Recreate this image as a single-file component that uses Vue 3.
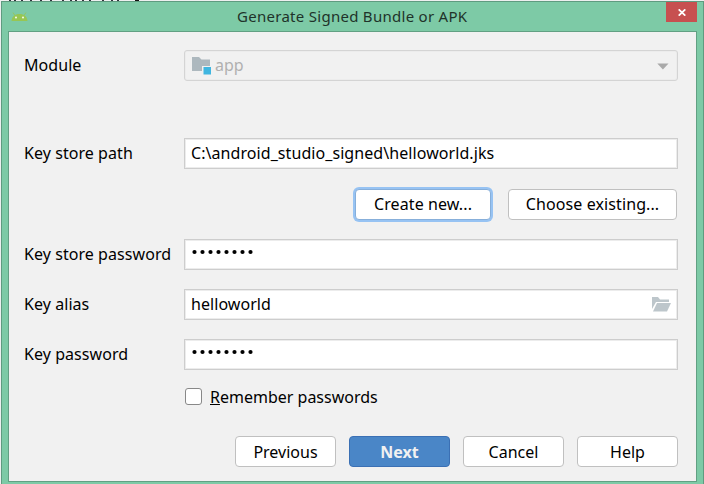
<script setup>
const title = 'Generate Signed Bundle or APK'
const dots = Array.from({ length: 8 }, (_, i) => 3.5 + i * 8)
const marks = [9, 14, 21, 30, 40, 50, 62, 70, 75, 82, 89, 102, 111, 117]
</script>

<template>
  <div class="screen">
    <svg class="behind" width="150" height="1">
      <rect v-for="x in marks" :key="x" :x="x" width="2" height="1" fill="#30343c" />
      <rect x="135" width="4" height="1" fill="#111" />
    </svg>
    <section class="window">
      <header class="titlebar">
        <svg class="droid" width="17" height="10" viewBox="0 0 17 10">
          <path d="M3.8 3.2 2 .6M13.2 3.2 15 .6" fill="none" stroke="#97c653" stroke-width=".9" />
          <path d="M.5 9C.8 4.6 4 2 8.5 2S16.2 4.6 16.5 9z" fill="#97c653" />
          <circle cx="5" cy="5.5" r=".9" fill="#fff" /><circle cx="12" cy="5.5" r=".9" fill="#fff" />
        </svg>
        <h1><span class="t-title">{{ title }}</span></h1>
        <button class="close" aria-label="Close">
          <svg width="8" height="7" viewBox="0 0 8 7"><path d="M.7.3 7.3 6.7M7.3.3.7 6.7" stroke="#fff" stroke-width="1.7" /></svg>
        </button>
      </header>
      <main class="content">
        <div class="row module">
          <label><span class="t-module">Module</span></label>
          <div class="field combo">
            <svg class="folder" width="20" height="19" viewBox="0 0 20 19">
              <path d="M0 1h7l2.5 2.5H18V10h-8v5H0z" fill="#adb8be" />
              <rect x="11.5" y="11" width="7.5" height="7.5" fill="#40b6e0" />
            </svg>
            <span class="t-app">app</span>
            <svg class="arrow" width="12" height="7" viewBox="0 0 12 7"><path d="M.3.5h11.2L5.9 6.5z" fill="#a9a9a9" /></svg>
          </div>
        </div>
        <div class="row path">
          <label><span class="t-path">Key store path</span></label>
          <div class="field"><span class="t-file">C:\android_studio_signed\helloworld.jks</span></div>
        </div>
        <div class="store-actions">
          <button class="btn focus"><span class="t-create">Create new...</span></button>
          <button class="btn choose"><span class="t-choose">Choose existing...</span></button>
        </div>
        <div class="row">
          <label><span class="t-storepw">Key store password</span></label>
          <div class="field"><svg class="dots" width="64" height="6"><circle v-for="x in dots" :key="x" :cx="x" cy="3" r="2.1" /></svg></div>
        </div>
        <div class="row">
          <label><span class="t-alias">Key alias</span></label>
          <div class="field">
            <span class="t-hello">helloworld</span>
            <svg class="open" width="20" height="15" viewBox="0 0 20 15">
              <path d="M0 0h6l2 2.5h9V5H4L0 12z" fill="#adb8be" opacity=".8" />
              <path d="M5 6h14l-4 8.5H1z" fill="#adb8be" opacity=".8" />
            </svg>
          </div>
        </div>
        <div class="row last">
          <label><span class="t-keypw">Key password</span></label>
          <div class="field"><svg class="dots" width="64" height="6"><circle v-for="x in dots" :key="x" :cx="x" cy="3" r="2.1" /></svg></div>
        </div>
        <div class="remember">
          <i class="check"></i>
          <span class="t-remember"><u>R</u>emember passwords</span>
        </div>
        <footer class="actions">
          <button class="btn"><span class="t-prev">Previous</span></button>
          <button class="btn primary"><span class="t-next">Next</span></button>
          <button class="btn"><span class="t-cancel">Cancel</span></button>
          <button class="btn"><span class="t-help">Help</span></button>
        </footer>
      </main>
    </section>
  </div>
</template>

<style>
body { overflow: hidden; background: #eef0f0; }
</style>

<style scoped>
* { box-sizing: border-box; }
.screen { width: 704px; height: 484px; overflow: hidden; font: 16px/22px "Noto Sans", "Open Sans", sans-serif; color: #000; }
.screen span { white-space: nowrap; }
.behind { display: block; }
.window { margin-left: 1px; width: 703px; height: 490px; background: #7dcaa6; border: 1px solid #5f9b80; display: flex; flex-direction: column; }
.titlebar { height: 29px; display: flex; align-items: flex-start; }
.droid { margin: 10px 0 0 9px; flex: none; }
h1 { margin: 3px 0 0 209px; font-weight: 400; font-size: 15px; line-height: 22px; width: 429px; color: #1f332a; }
.t-title { letter-spacing: .28px; }
button { font: inherit; padding: 0; margin: 0; color: inherit; }
.close { width: 31px; height: 20px; border: 0; background: #c75050; display: flex; align-items: center; justify-content: center; }
.content { margin-left: 6px; width: 689px; height: 451px; border: 1px solid #62a083; background: #f1f1f1; padding: 18px 18px 0 15px; display: flex; flex-direction: column; }
.row { display: grid; grid-template-columns: 160px 494px; height: 31px; margin-bottom: 19px; align-items: center; flex: none; }
.row.module { margin-bottom: 57px; }
.row.path { margin-bottom: 20px; }
.row.last { margin-bottom: 16px; }
.row label, .row .field { padding-bottom: 2px; }
.field { height: 31px; border: 1px solid #cdcdcd; background: #fff; display: flex; align-items: center; padding: 0 6px; box-shadow: inset 0 0 0 1px #ececec; }
.combo { border-radius: 3px; background: #f1f1f1; color: #b0b0b0; border-color: #d4d4d4; padding-left: 7px; padding-right: 8px; }
.folder { margin: 2px 3px 0 0; }
.arrow, .open { margin-left: auto; }
.arrow { margin-top: 3px; }
.open { margin-top: 2px; margin-right: -1px; }
.dots { margin-bottom: 3px; }
.t-file { letter-spacing: .07px; }
.t-module, .t-path, .t-storepw, .t-alias, .t-keypw, .t-hello { letter-spacing: .06px; }
.store-actions { display: flex; justify-content: flex-end; gap: 17px; height: 31px; margin-bottom: 19px; padding-right: 1px; flex: none; }
.store-actions .btn { padding-bottom: 2px; }
.btn { width: 101px; height: 31px; border: 1px solid #c0c0c0; border-radius: 4px; background: #fff; display: flex; align-items: center; justify-content: center; }
.btn.focus { width: 136px; border-color: #87afda; box-shadow: 0 0 0 2px #97c3f3; }
.btn.choose { width: 169px; }
.t-create, .t-choose { letter-spacing: .1px; }
.primary { background: #4a86c7; border-color: #3b70b4; color: #f1f1f1; font-weight: 700; }
.remember { display: flex; align-items: center; height: 22px; gap: 8px; margin-left: 161px; }
.check { width: 17px; height: 17px; margin-bottom: 2px; border: 1px solid #888; border-radius: 3px; background: #fff; }
.actions { display: flex; justify-content: flex-end; gap: 13px; margin-top: 28px; padding-right: .5px; }
.actions span { padding-left: 1px; }
</style>
